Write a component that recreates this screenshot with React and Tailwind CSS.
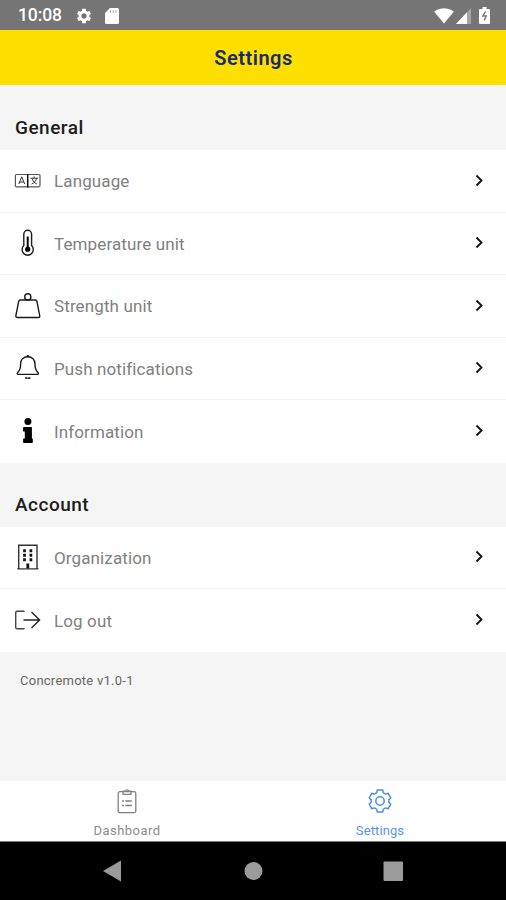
import { MdSettings } from "react-icons/md";

function LanguageIcon() {
  return (
    <svg width="28" height="28" viewBox="0 0 28 28" fill="none" stroke="#333" strokeWidth="1">
      <rect x="1.4" y="7.5" width="24.6" height="12.3" rx="1.2" stroke="#555" strokeWidth="1.2" />
      <path d="M13.7 7v13.5" stroke="#111" strokeWidth="1.5" />
      <path d="M4.8 17l2.9-7.2 3 7.2M5.6 15h4.2" />
      <path d="M16.5 11.2h7.5M20.2 9.5v1.7M22.6 11.4c-.8 2.6-2.5 4.6-5 5.6M18 11.6c.8 2.5 2.4 4.4 4.8 5.4" />
    </svg>
  );
}

function ThermometerIcon() {
  return (
    <svg width="28" height="28" viewBox="0 0 28 28" fill="none" stroke="#1a1a1a" strokeWidth="1.4">
      <path d="M9.8 16.6V5.2a3.9 3.9 0 0 1 7.8 0v11.4a5.6 5.6 0 1 1-7.8 0z" />
      <path d="M13.7 7.5v11" stroke="#000" strokeWidth="2" />
      <circle cx="13.7" cy="20.2" r="2.6" fill="#000" stroke="none" />
    </svg>
  );
}

function WeightIcon() {
  return (
    <svg width="28" height="28" viewBox="0 0 28 28" fill="none" stroke="#1a1a1a" strokeWidth="1.4">
      <circle cx="13.8" cy="4.9" r="3.1" />
      <path d="M6.2 8h15.2c.9 0 1.3.4 1.5 1.3l2.8 14.4c.2 1.2-.2 1.8-1.3 1.8H3.2c-1.1 0-1.5-.6-1.3-1.8L4.7 9.3C4.900 8.400 5.300 8 6.200 8z" />
    </svg>
  );
}

function BellIcon() {
  return (
    <svg width="28" height="28" viewBox="0 0 28 28" fill="none" stroke="#1a1a1a" strokeWidth="1.4">
      <path d="M13.8 2.8c-4.4 0-7.2 3-7.2 7.300 0 5.600-1.100 7-2.900 8.400-.9.900-.5 1.900.6 1.900h19c1.100 0 1.500-1 .6-1.900-1.800-1.400-2.900-2.800-2.900-8.400 0-4.300-2.800-7.300-7.200-7.300z" />
      <path d="M12.700 2.100h2.200" strokeWidth="2" />
      <path d="M11.200 24.200h5.200" strokeWidth="1.800" strokeDasharray="2.300 0.600" />
    </svg>
  );
}

function InfoIcon() {
  return (
    <svg width="28" height="28" viewBox="0 0 28 28" fill="#000">
      <circle cx="13.9" cy="4.5" r="3.5" />
      <path d="M9.800 9.900h7.400q.7 0 .7.700v10.800h.2q.7 0 .7.700v3.200q0 .7-.7.700H9.800q-.7 0-.7-.7v-3.200q0-.7.7-.7h1v-6.800h-1q-.7 0-.7-.7v-3.300q0-.7.7-.7z" />
    </svg>
  );
}

function BuildingIcon() {
  return (
    <svg width="28" height="28" viewBox="0 0 28 28" fill="none" stroke="#333" strokeWidth="1.4">
      <path d="M4.7 25.5V2.3h18.300v23.200M3.200 25.900h21.200" />
      <path d="M10.500 6.300v12M16.900 6.300v12" stroke="#111" strokeWidth="2.700" strokeDasharray="3 1.500" />
      <path d="M13.800 20.500v5" stroke="#111" strokeWidth="2.800" />
    </svg>
  );
}

function LogoutIcon() {
  return (
    <svg width="28" height="28" viewBox="0 0 28 28" fill="none" stroke="#222" strokeWidth="1.4">
      <path d="M10.500 5.200H3.300c-1 0-1.600.6-1.600 1.600v14.400c0 1 .6 1.600 1.600 1.600h7.200" stroke="#444" />
      <path d="M9.500 14h16M17.500 5.900l8.100 8.100-8.100 8.100" />
    </svg>
  );
}

function ClipboardIcon() {
  return (
    <svg width="24" height="26" viewBox="0 0 24 26" fill="none" stroke="#808080" strokeWidth="1.3">
      <rect x="3.200" y="3.700" width="17.600" height="21" rx="1.800" />
      <path d="M8 3.200v3.200h8V3.200h-2.200a1.900 1.900 0 0 0-3.600 0z" />
      <path d="M7 13h2M10.300 13h6.500M7 17.500h2M10.300 17.500h6.500" />
    </svg>
  );
}

function GearIcon() {
  return (
    <svg width="24" height="24" viewBox="0 0 24 24" fill="none" stroke="#4a8fdf" strokeWidth="1.5" strokeLinejoin="round">
      <path d="M9.2 1.1H14.8L15.2 3.7L17.7 5.1L20.1 4.2L22.8 9L20.8 10.6V13.4L22.8 15L20.1 19.8L17.7 18.9L15.2 20.3L14.8 22.9H9.2L8.8 20.3L6.3 18.9L3.9 19.8L1.2 15L3.2 13.4V10.6L1.2 9L3.9 4.2L6.3 5.1L8.8 3.7Z" />
      <circle cx="12" cy="12" r="4.2" />
    </svg>
  );
}

const general = [
  { label: "Language", icon: LanguageIcon },
  { label: "Temperature unit", icon: ThermometerIcon },
  { label: "Strength unit", icon: WeightIcon },
  { label: "Push notifications", icon: BellIcon },
  { label: "Information", icon: InfoIcon },
];

const account = [
  { label: "Organization", icon: BuildingIcon },
  { label: "Log out", icon: LogoutIcon },
];

function Section({ title, items }) {
  return (
    <section>
      <h2 className="h-16 pt-[28px] pl-[15px] text-[19px] leading-7 font-medium tracking-[0.5px] text-[#1c1c1c]">
        {title}
      </h2>
      <ul className="divide-y divide-[#f2f2f2] bg-white">
        {items.map(({ label, icon: Icon }) => (
          <li key={label} className="flex h-[62.5px] items-center pr-5 pl-[14px]">
            <Icon />
            <span className="mt-0.5 ml-3 flex-1 text-[17px] tracking-[0.12px] text-[#808080]">{label}</span>
            <svg width="14" height="16" viewBox="0 0 14 16" fill="none" stroke="#111" strokeWidth="1.8">
              <path d="M4.5 2.500l5 5-5 5" />
            </svg>
          </li>
        ))}
      </ul>
    </section>
  );
}

function StatusBar() {
  return (
    <div className="flex h-[30px] items-center bg-[#757575] pt-px pr-4 pl-[18px] text-white">
      <span className="w-[57px] text-[17.5px] font-medium tracking-[-0.1px]">10:08</span>
      <MdSettings size={18} />
      <svg className="ml-3" width="14" height="16" viewBox="0 0 14 16" fill="white">
        <path d="M5 0h7.500Q14 0 14 1.500v13q0 1.500-1.500 1.500h-11Q0 16 0 14.500V5z" />
        <path d="M5.500 2v3M8.200 2v3M10.900 2v3" stroke="#b5b5b5" strokeWidth="1" />
      </svg>
      <div className="ml-auto flex items-center">
        <svg width="20" height="16" viewBox="0 0 20 16" fill="white">
          <path d="M0 3.500Q10-3 20 3.500L10 15.500z" />
        </svg>
        <svg className="ml-0.5" width="15" height="16" viewBox="0 0 15 16" fill="white">
          <path d="M15 0v16H0z" opacity="0.35" />
          <path d="M11 4.300V16H0z" />
        </svg>
        <svg className="ml-2" width="11" height="17" viewBox="0 0 11 17">
          <path d="M3.500 0h4v2h2.500q1 0 1 1v13q0 1-1 1H1q-1 0-1-1V3q0-1 1-1h2.500z" fill="white" />
          <path d="M6.500 4.500L3.800 9H7.200l-2 4.500" fill="none" stroke="#757575" strokeWidth="1.4" />
        </svg>
      </div>
    </div>
  );
}

function App() {
  return (
    <div className="flex h-[900px] w-[506px] flex-col bg-[#f5f5f5] font-['Roboto',sans-serif]">
      <StatusBar />
      <header className="flex h-[55px] items-center justify-center bg-[#ffdf00]">
        <h1 className="pl-px text-[20px] leading-7 font-semibold tracking-[0.5px] text-[#172b70]">Settings</h1>
      </header>

      <main className="flex-1 pt-px">
        <Section title="General" items={general} />
        <Section title="Account" items={account} />
        <p className="pt-[19px] pl-5 text-[13px] leading-5 tracking-[0.25px] text-[#666]">Concremote v1.0-1</p>
      </main>

      <nav className="flex h-[61px] border-b border-[#777] bg-white text-[13px] leading-4">
        <div className="flex flex-1 flex-col items-center pt-[7px] text-[#8c8c8c]">
          <ClipboardIcon />
          <span className="mt-[9px] pl-px tracking-[0.45px]">Dashboard</span>
        </div>
        <div className="flex flex-1 flex-col items-center pt-2 text-[#5a94e8]">
          <GearIcon />
          <span className="mt-[10px] pl-px tracking-[0.1px]">Settings</span>
        </div>
      </nav>

      <div className="h-[58px] bg-black">
        <svg width="506" height="58" viewBox="0 0 506 58" fill="#9b9b9b">
          <path d="M103 29l18-10.500v21z" />
          <circle cx="253.500" cy="29" r="9" />
          <rect x="383.500" y="19.500" width="19.500" height="19.500" rx="1" />
        </svg>
      </div>
    </div>
  );
}

export default App;
